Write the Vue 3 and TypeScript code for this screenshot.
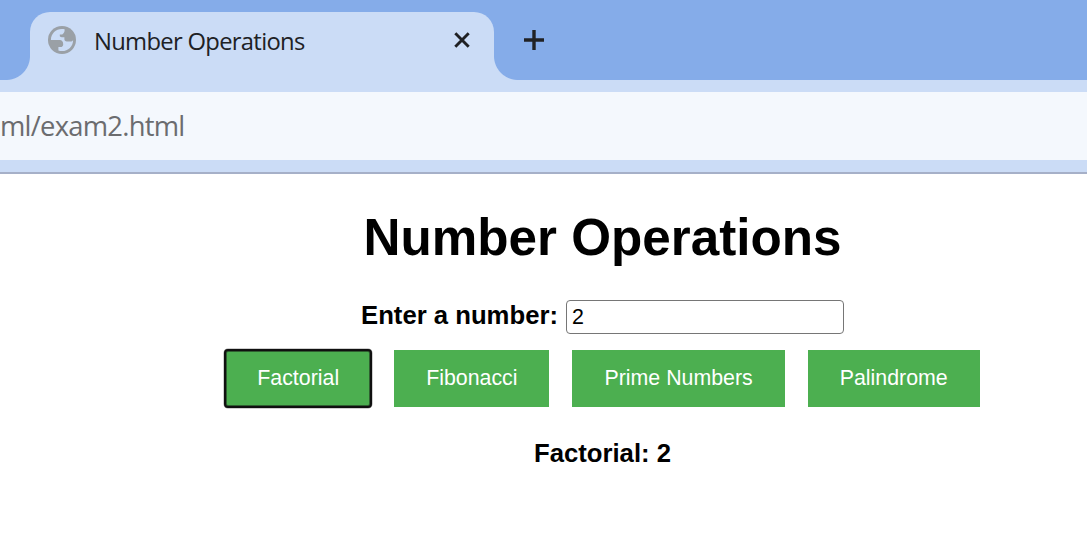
<script setup lang="ts">
import { ref } from 'vue'

const title = 'Number Operations'
const value = ref('2')
const operations: string[] = ['Factorial', 'Fibonacci', 'Prime Numbers', 'Palindrome']
const active = ref('Factorial')
</script>

<template>
  <div class="window">
    <header class="tabstrip">
      <div class="tab">
        <svg class="globe" viewBox="0 0 28 28" width="28" height="28">
          <circle cx="14" cy="14" r="14" fill="#9aa0a6" />
          <path
            d="M2.9 13.9C3 7.6 7.8 3 13.8 3C14.8 3 15.8 3.1 16.6 3.3V4.6C16.6 6.4 15.5 7.8 14.2 8.4H11.8V9.8C11.8 10.8 12.6 11.2 13.8 11.2H16.4V13.2C16.4 14.6 17.4 15.4 18.8 15.4H22.4C23.6 15.4 24.6 14.9 25.1 13.9C25.2 20.2 20.2 25.1 14 25.1C12.7 25.1 11.5 24.9 10.4 24.5V21H12.6C14.2 21 15.2 19.9 15.2 18.4C15.2 15.6 14 13.9 11.7 13.9Z"
            fill="#cbdcf6"
          />
        </svg>
        <span class="tab-title">{{ title }}</span>
        <svg class="close" viewBox="0 0 18 18" width="18" height="18">
          <path d="M2.3 2.3 15.7 15.7M15.7 2.3 2.3 15.7" />
        </svg>
      </div>
      <svg class="plus" viewBox="0 0 20 20" width="20" height="20">
        <path d="M10 0V20M0 10H20" />
      </svg>
    </header>
    <div class="toolbar">
      <div class="address">ml/exam2.html</div>
    </div>
    <main class="page">
      <h1>{{ title }}</h1>
      <div class="field">
        <label for="number">Enter a number:</label>
        <input id="number" v-model="value" type="text" />
      </div>
      <div class="actions">
        <button
          v-for="op in operations"
          :key="op"
          type="button"
          :class="{ active: active === op }"
          @click="active = op"
        >{{ op }}</button>
      </div>
      <p class="result">{{ active }}: 2</p>
    </main>
  </div>
</template>

<style>
body {
  margin: 0;
  background: #fff;
}
</style>

<style scoped>
.window {
  width: 1087px;
  height: 560px;
  overflow: hidden;
  background: #fff;
  font-family: "Liberation Sans", Arial, sans-serif;
}
.tabstrip {
  display: flex;
  box-sizing: border-box;
  height: 80px;
  padding: 12px 0 0 30px;
  background: #85ace9;
}
.tab {
  position: relative;
  display: flex;
  align-items: flex-start;
  box-sizing: border-box;
  width: 464px;
  height: 68px;
  padding: 14px 23px 0 18px;
  border-radius: 20px 20px 0 0;
  background: #cbdcf6;
}
.tab::before,
.tab::after {
  content: "";
  position: absolute;
  bottom: 0;
  width: 24px;
  height: 24px;
}
.tab::before {
  right: 100%;
  background: radial-gradient(circle at 0 0, transparent 23.5px, #cbdcf6 24.5px);
}
.tab::after {
  left: 100%;
  background: radial-gradient(circle at 24px 0, transparent 23.5px, #cbdcf6 24.5px);
}
.globe {
  flex: none;
}
.tab-title {
  margin-left: 18px;
  font: 23.8px/31px "Open Sans", "Noto Sans", sans-serif;
  letter-spacing: -0.7px;
  white-space: nowrap;
  color: #202124;
}
.close {
  flex: none;
  margin: 5px 0 0 auto;
  fill: none;
  stroke: #202124;
  stroke-width: 2.9;
}
.plus {
  margin: 18px 0 0 30px;
  fill: none;
  stroke: #202124;
  stroke-width: 3.4;
}
.toolbar {
  box-sizing: border-box;
  height: 94px;
  padding-top: 12px;
  border-bottom: 2px solid #a6b0c8;
  background: #cbdcf6;
}
.address {
  height: 68px;
  background: #f4f8fd;
  font: 27.4px/67px "Open Sans", "Noto Sans", sans-serif;
  letter-spacing: -0.76px;
  color: #6b6c6f;
}
.page {
  display: flex;
  flex-direction: column;
  align-items: center;
  padding: 34px 0 0 118px;
  color: #000;
}
h1 {
  margin: 0;
  font-size: 51.2px;
  line-height: 60px;
  white-space: nowrap;
}
.field {
  display: flex;
  align-items: center;
  gap: 8px;
  height: 34px;
  margin-top: 32px;
}
label {
  height: 34px;
  font-size: 25.7px;
  font-weight: bold;
  line-height: 30px;
}
input {
  box-sizing: border-box;
  width: 278px;
  height: 34px;
  padding: 1px 5px;
  border: 1px solid #767676;
  border-radius: 4px;
  outline: none;
  background: #fff;
  font: 21.4px "Liberation Sans", Arial, sans-serif;
  color: #000;
}
.actions {
  display: flex;
  gap: 23px;
  margin-top: 16px;
}
button {
  height: 57px;
  padding: 0 32px;
  border: 0;
  background: #4caf50;
  font: 21.35px/57px "Liberation Sans", Arial, sans-serif;
  white-space: nowrap;
  color: #fff;
}
.active {
  border-radius: 3px;
  outline: 2px solid #101010;
  outline-offset: -1px;
  box-shadow: 0 0 0 1.5px rgba(16, 16, 16, 0.4), inset 0 0 0 2px rgba(16, 16, 16, 0.5);
}
.result {
  margin: 31px 0 0;
  font-size: 25.7px;
  font-weight: bold;
  line-height: 30px;
}
</style>
